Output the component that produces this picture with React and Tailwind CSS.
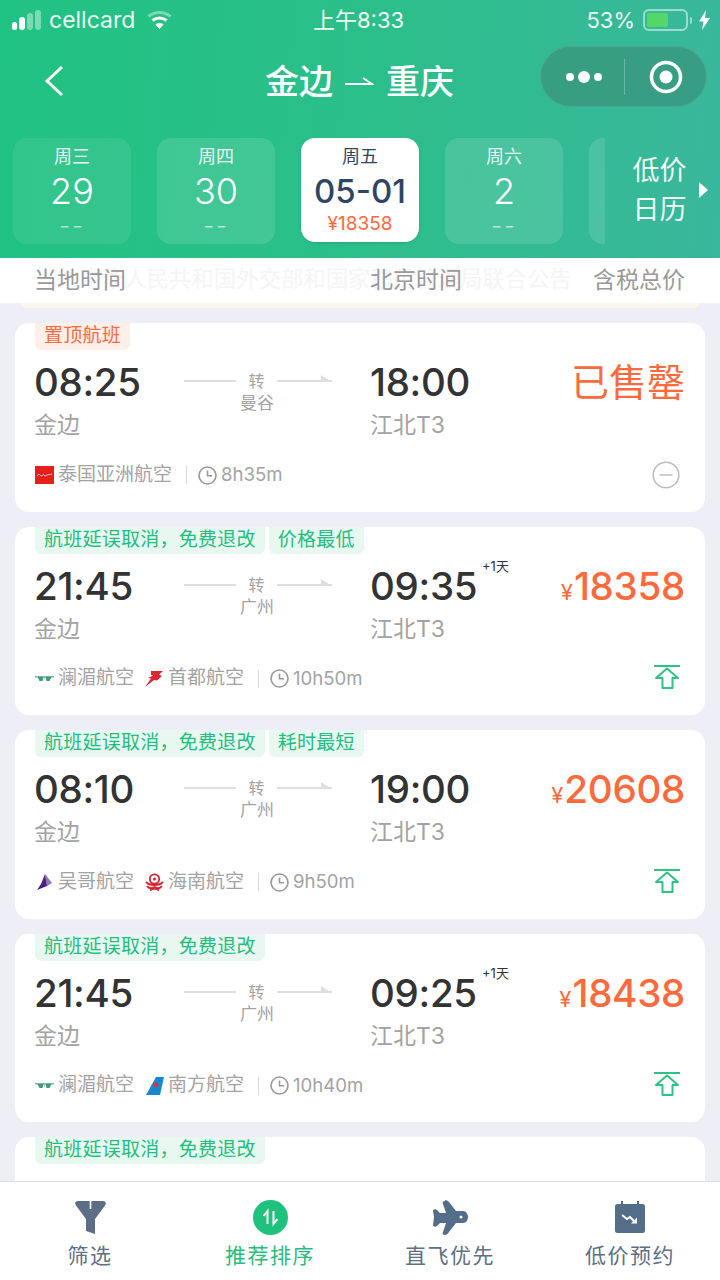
import React from "react";

const Clock = () => (
  <svg width="19" height="19" viewBox="0 0 19 19" fill="none" stroke="#999" strokeWidth="1.6">
    <circle cx="9.5" cy="9.5" r="8.5" />
    <path d="M9.5 4.5v5.2h4.6" />
  </svg>
);

const AirAsia = () => (
  <svg width="19" height="18" viewBox="0 0 19 18">
    <rect width="19" height="18" fill="#e3201b" />
    <path d="M2 10c2-3 3-1 4 0s2-3 3-1 2 1 3 0 3 0 5-1" stroke="#fff" strokeWidth="0.8" fill="none" />
  </svg>
);
const Lanmei = () => (
  <svg width="19" height="12" viewBox="0 0 19 12">
    <path d="M0 3h19v1.6H0z" fill="#7ab89a" />
    <path d="M2.500 4h6l-1 4H4.500zM10.500 4h6l-2 4h-3z" fill="#3e9c74" />
    <path d="M8.500 4.600h2L9.500 7z" fill="#8fb7d6" />
  </svg>
);
const Capital = () => (
  <svg width="19" height="18" viewBox="0 0 19 18">
    <path d="M6 1h12l-4 3.500 3 1.500-5 4.500-3-.5-9 7 6-8.500-3-.5 5-2.500-2-.5z" fill="#dc2630" />
  </svg>
);
const Vietjet = () => (
  <svg width="17" height="18" viewBox="0 0 17 18">
    <path d="M9 1l7 9-5 3z" fill="#8f7aa8" />
    <path d="M9 1L5 11l-4 6 10-4z" fill="#4a1f7d" />
  </svg>
);
const Hainan = () => (
  <svg width="19" height="19" viewBox="0 0 19 19" fill="none">
    <circle cx="9.500" cy="6" r="4.700" stroke="#d9232e" strokeWidth="1.800" />
    <circle cx="9.500" cy="6" r="1.500" fill="#d9232e" />
    <path d="M1 9c3 3 5 3 8.500 3S15 12 18 9M2 13c2 3 4 3 7.500 1 3.500 2 5.500 2 7.500-1M5 17.500c2-1.500 3-2 4.500-1.500 1.500-.5 2.500 0 4.500 1.500" stroke="#d9232e" strokeWidth="1.800" />
  </svg>
);
const Southern = () => (
  <svg width="19" height="20" viewBox="0 0 19 20">
    <path d="M11 1h8l-4 18H1z" fill="#1588d0" />
    <circle cx="11" cy="9" r="2.400" fill="#d8343f" />
  </svg>
);

const UpIcon = () => (
  <svg className="mt-[-3px]" width="26" height="24" viewBox="0 0 26 24" fill="none" stroke="#2ec385" strokeWidth="2" strokeLinejoin="round">
    <path d="M0 1h26" />
    <path d="M13 3.500L2 13h6.500v10h10V13H24z" />
  </svg>
);
const Minus = () => (
  <svg width="28" height="28" viewBox="0 0 28 28" fill="none" stroke="#bdbdbd" strokeWidth="1.600">
    <circle cx="14" cy="14" r="12.800" />
    <path d="M7.500 14h13" />
  </svg>
);

const Tag = ({ orange, children }) => (
  <div
    className={
      orange
        ? "h-[27px] px-[9px] rounded-b-md bg-[#ffefe9] text-[#ff6a3c] text-[19px] tracking-[0.25px] leading-[26px]"
        : "h-[27px] px-[9px] rounded-b-md bg-[#e8f8f1] text-[#23bd80] text-[19px] tracking-[0.25px] leading-[26px]"
    }
  >
    {children}
  </div>
);

function Card({ tags, orange, dep, arr, via, plus, price, sold, airlines, dur, last }) {
  return (
    <div className="h-[188.500px] shrink-0 bg-white rounded-[14px] overflow-hidden">
      <div className="flex gap-[4px] ml-[20px]">
        {tags.map((t) => (
          <Tag key={t} orange={orange}>
            {t}
          </Tag>
        ))}
      </div>
      <div className="flex pl-[19px] pr-[20px] mt-[10px]">
        <div className="w-[150px]">
          <div className="text-[38.500px] leading-[44px] font-medium text-[#333] tracking-[-0.3px]">{dep}</div>
          <div className="mt-[7px] text-[23px] leading-[28px] text-[#a3a3a3]">金边</div>
        </div>
        <div className="w-[148px] pt-[10px]">
          <div className="flex items-center h-[22px]">
            <div className="w-[52px] h-[2px] bg-[#dedede]" />
            <div className="w-[41px] text-center text-[16px] leading-[22px] text-[#a3a3a3]">转</div>
            <div className="relative w-[55px] h-[2px] bg-[#dedede]">
              <div className="absolute right-0 bottom-0 w-0 h-0 border-l-[11px] border-l-[#dedede] border-t-[7px] border-t-transparent" />
            </div>
          </div>
          <div className="w-[146px] text-center text-[17px] leading-[22px] text-[#a3a3a3]">{via}</div>
        </div>
        <div className="ml-[38px] relative">
          <div className="text-[38.500px] leading-[44px] font-medium text-[#333] tracking-[-0.3px]">{arr}</div>
          {plus && <div className="absolute left-[112px] top-[-7px] whitespace-nowrap text-[13px] leading-[18px] text-[#333]">+1天</div>}
          <div className="mt-[7px] text-[23px] leading-[28px] text-[#a3a3a3]">江北T3</div>
        </div>
        <div className="ml-auto">
          {sold ? (
            <div className="text-[38px] leading-[44px] text-[#ff6a3c]">已售罄</div>
          ) : (
            <div className="flex items-baseline text-[#ff6a3c] leading-[44px]">
              <span className="text-[22px] mr-[1px]">¥</span>
              <span className="text-[38.600px] font-medium tracking-[-0.3px]">{price}</span>
            </div>
          )}
        </div>
      </div>
      <div className="flex items-center h-[26px] mt-[23px] pl-[20px] pr-[25px] text-[19px] text-[#a3a3a3]">
        {airlines.map(([Logo, name], i) => (
          <div key={name} className={i ? "flex items-center ml-[11px]" : "flex items-center"}>
            <div className="w-[19px] flex justify-center">
              <Logo />
            </div>
            <span className="ml-[4px]">{name}</span>
          </div>
        ))}
        <div className="ml-[14px] w-[1px] h-[18px] bg-[#d9d9d9]" />
        <div className="ml-[11px] flex">
          <Clock />
        </div>
        <span className="ml-[4px] text-[18.600px]">{dur}</span>
        <div className="ml-auto flex">{sold ? <Minus /> : <UpIcon />}</div>
      </div>
    </div>
  );
}

const Day = ({ w, n, op }) => (
  <div className={"w-[118px] h-[106px] shrink-0 rounded-[14px] flex flex-col items-center text-white " + op}>
    <div className="text-[18px] leading-[24px] mt-[7px] opacity-90">{w}</div>
    <div className="text-[36px] leading-[44px] font-light">{n}</div>
    <div className="text-[24px] leading-[24px] mt-[1px] tracking-[2px] font-light opacity-60">--</div>
  </div>
);

const Tab = ({ icon, label, green }) => (
  <div className="w-[180px] flex flex-col items-center">
    <div className="h-[36px] flex items-center justify-center">{icon}</div>
    <div className={"mt-[7px] text-[21px] leading-[28px] tracking-[1.500px] " + (green ? "text-[#27bd7f]" : "text-[#5f6f84]")}>{label}</div>
  </div>
);

export default function App() {
  return (
    <div className="w-[720px] h-[1280px] overflow-hidden flex flex-col bg-[#eeeef6] [font-family:Inter,'Noto_Sans_CJK_SC',sans-serif]">
      <div className="h-[258px] shrink-0 bg-[linear-gradient(95deg,#20c282_0%,#2bbf8a_50%,#3ab79c_100%)] text-white">
        <div className="h-[40px] flex items-center relative pl-[12px] pr-[10px] text-[22px]">
          <div className="flex items-end gap-[2px] h-[20px]">
            <div className="w-[5px] h-[8px] rounded-full bg-white" />
            <div className="w-[6px] h-[13px] rounded-full bg-white" />
            <div className="w-[6px] h-[17px] rounded-full bg-white/40" />
            <div className="w-[6px] h-[20px] rounded-full bg-white/40" />
          </div>
          <span className="ml-[8px] opacity-90 leading-[28px] text-[23px]">cellcard</span>
          <svg className="ml-[12px]" width="25" height="20" viewBox="0 0 25 20" fill="none" stroke="#fff" strokeWidth="3">
            <path d="M1.500 6.500c6-5.500 16-5.500 22 0" opacity=".4" />
            <path d="M5.500 10.500c4-3.500 10-3.500 14 0" />
            <path d="M12.500 18.500l-3.500-4c2-1.500 5-1.500 7 0z" fill="#fff" strokeWidth="1" />
          </svg>
          <span className="absolute left-[313px] leading-[28px] opacity-95">上午8:33</span>
          <span className="ml-auto leading-[28px] opacity-90">53%</span>
          <div className="ml-[8px] w-[45px] h-[22px] rounded-[6px] border-[2px] border-white/50 p-[2px]">
            <div className="w-[21px] h-full rounded-[2px] bg-[#53d769]" />
          </div>
          <div className="ml-[2px] w-[2px] h-[7px] bg-white/50 rounded-r" />
          <svg className="ml-[7px]" width="11" height="20" viewBox="0 0 11 20">
            <path d="M7 0L0 11.500h4.500L3 20l8-12H6z" fill="#fff" />
          </svg>
        </div>
        <div className="h-[61px] mt-[6px] flex items-center relative">
          <svg className="ml-[44px] mt-[8px]" width="20" height="32" viewBox="0 0 20 32" fill="none" stroke="#fff" strokeWidth="3">
            <path d="M18 2L3 16l15 14" />
          </svg>
          <div className="absolute left-[265px] top-[5px] h-[60px] flex items-center text-[34px] font-medium">
            <span>金边</span>
            <svg className="mx-[12px]" width="29" height="10" viewBox="0 0 29 10" fill="none" stroke="#fff" strokeWidth="2">
              <path d="M0 8h27L18 2" />
            </svg>
            <span>重庆</span>
          </div>
          <div className="ml-auto mr-[13px] w-[167px] h-[61px] rounded-full bg-[#38997f]/85 border border-white/10 flex items-center">
            <div className="w-[83px] flex items-center justify-center gap-[4px] pl-[3px]">
              <div className="w-[8px] h-[8px] rounded-full bg-white" />
              <div className="w-[12px] h-[12px] rounded-full bg-white" />
              <div className="w-[8px] h-[8px] rounded-full bg-white" />
            </div>
            <div className="w-[1px] h-[36px] bg-white/25" />
            <div className="flex-1 flex justify-center">
              <svg width="34" height="34" viewBox="0 0 34 34">
                <circle cx="17" cy="17" r="14.500" fill="none" stroke="#fff" strokeWidth="3.500" />
                <circle cx="17" cy="17" r="6.500" fill="#fff" />
              </svg>
            </div>
          </div>
        </div>
        <div className="flex mt-[31px]">
          <div className="w-[605px] shrink-0 overflow-hidden flex gap-[26px] pl-[13px] h-[110px]">
            <Day w="周三" n="29" op="bg-white/[0.08]" />
            <Day w="周四" n="30" op="bg-white/[0.12]" />
            <div className="w-[118px] h-[104px] shrink-0 rounded-[14px] bg-white flex flex-col items-center shadow-[0_1px_3px_rgba(0,0,0,0.12)]">
              <div className="text-[18px] leading-[24px] mt-[7px] text-[#2e4663]">周五</div>
              <div className="text-[33px] leading-[44px] font-medium text-[#2e4663]">05-01</div>
              <div className="text-[19px] leading-[24px] mt-[-1px] text-[#ff6a3c]">¥18358</div>
            </div>
            <Day w="周六" n="2" op="bg-white/[0.12]" />
            <div className="w-[118px] h-[106px] shrink-0 rounded-[14px] bg-white/[0.12]" />
          </div>
          <div className="flex-1 flex items-start">
            <div className="w-[94px] mt-[13px] flex flex-col items-center text-[27px] leading-[39px] text-white/95 pl-[15px]">
              <span>低价</span>
              <span>日历</span>
            </div>
            <div className="mt-[44px] w-0 h-0 border-l-[9px] border-l-white border-y-[8px] border-y-transparent" />
          </div>
        </div>
      </div>

      <div className="relative h-[45px] shrink-0 bg-white flex items-center pl-[34px] pr-[35px] pb-[2px] text-[23px] leading-[30px] text-[#999] z-10">
        <div className="absolute right-[148px] top-[6px] whitespace-nowrap text-[22.400px] text-[#f5f5f5]">中华人民共和国外交部和国家移民管理局联合公告</div>
        <span className="relative">当地时间</span>
        <span className="relative ml-[244px]">北京时间</span>
        <span className="relative ml-auto">含税总价</span>
      </div>
      <div className="h-[5px] mx-[20px] shrink-0 bg-[#faf6ec] rounded-b-[8px]" />

      <div className="flex-1 min-h-0 overflow-hidden px-[15px] pt-[15px] flex flex-col gap-[15px]">
        <Card orange tags={["置顶航班"]} dep="08:25" arr="18:00" via="曼谷" sold airlines={[[AirAsia, "泰国亚洲航空"]]} dur="8h35m" />
        <Card tags={["航班延误取消，免费退改", "价格最低"]} dep="21:45" arr="09:35" via="广州" plus price="18358" airlines={[[Lanmei, "澜湄航空"], [Capital, "首都航空"]]} dur="10h50m" />
        <Card tags={["航班延误取消，免费退改", "耗时最短"]} dep="08:10" arr="19:00" via="广州" price="20608" airlines={[[Vietjet, "吴哥航空"], [Hainan, "海南航空"]]} dur="9h50m" />
        <Card tags={["航班延误取消，免费退改"]} dep="21:45" arr="09:25" via="广州" plus price="18438" airlines={[[Lanmei, "澜湄航空"], [Southern, "南方航空"]]} dur="10h40m" />
        <Card tags={["航班延误取消，免费退改"]} dep="21:45" arr="09:25" via="广州" price="18438" airlines={[[Lanmei, "澜湄航空"]]} dur="10h40m" />
      </div>

      <div className="h-[99px] shrink-0 bg-white border-t border-[#dcdcdc] flex pt-[17px] relative z-10">
        <Tab
          label="筛选"
          icon={
            <svg width="31" height="33" viewBox="0 0 31 33">
              <path d="M3 0H28c3 0 3.500 2.500 2 4.500L20 18V33l-9-3V18L1 4.500C-.500 2.500 0 0 3 0z" fill="#5b6e86" />
              <rect x="14.700" y="0" width="1.600" height="8" fill="#fff" />
            </svg>
          }
        />
        <Tab
          green
          label="推荐排序"
          icon={
            <svg width="35" height="35" viewBox="0 0 35 35">
              <circle cx="17.500" cy="17.500" r="17.500" fill="#1fc27d" />
              <path d="M14.500 24V11l-4 5M20.500 11v13l4-5" fill="none" stroke="#fff" strokeWidth="2" />
            </svg>
          }
        />
        <Tab
          label="直飞优先"
          icon={
            <svg width="36" height="35" viewBox="0 0 36 35">
              <path d="M13 0c2 0 3 1 4 2l7 9h7c3 0 5 3 5 6s-2 6-5 6h-7l-7 9c-1 2-3 3-4 3-2 0-3-1-2-3l3-9H8l-3 3c-1 1-4 1-4-1l1-8-1-6c0-2 3-2 4-1l3 3h6l-3-9c-1-2 0-3 2-3z" fill="#546e8a" />
              <circle cx="29" cy="17" r="1.500" fill="#fff" />
            </svg>
          }
        />
        <Tab
          label="低价预约"
          icon={
            <svg width="32" height="32" viewBox="0 0 32 32">
              <rect x="1" y="3" width="30" height="29" rx="2.500" fill="#546e8a" />
              <path d="M7 0h2v4H7zM23 0h2v4h-2z" fill="#546e8a" />
              <path d="M8 14l5 4 3-2 5 5" fill="none" stroke="#fff" strokeWidth="2" />
              <path d="M17 22.500h6v-6z" fill="#fff" />
            </svg>
          }
        />
      </div>
    </div>
  );
}
